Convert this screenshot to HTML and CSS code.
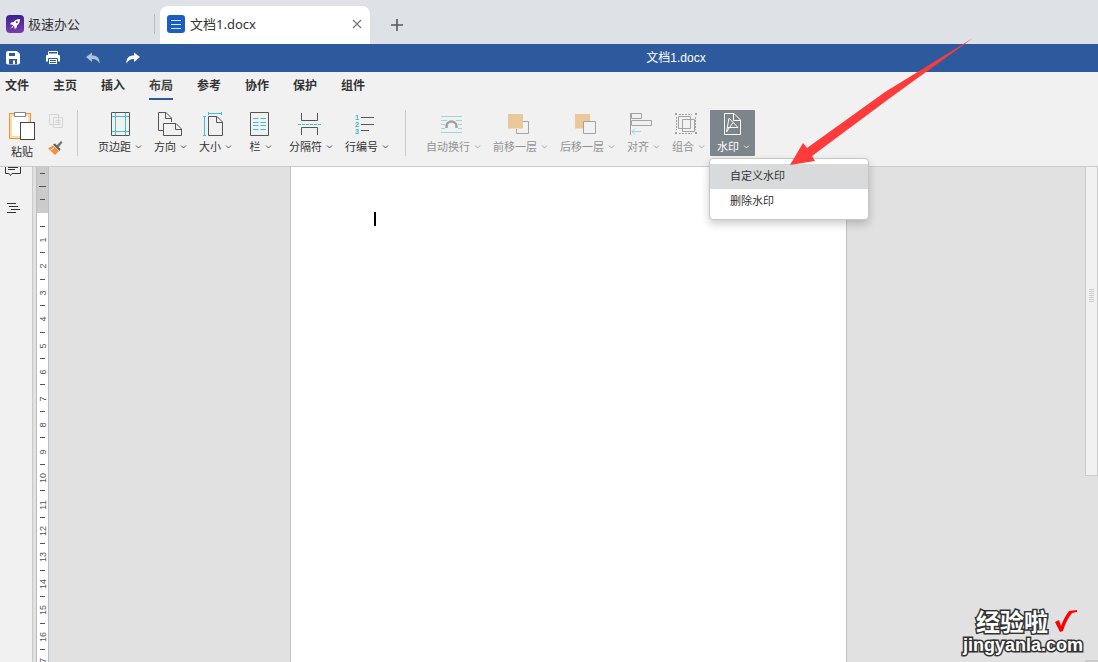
FILE: index.html
```html
<!DOCTYPE html>
<html lang="zh-CN">
<head>
<meta charset="utf-8">
<title>文档1.docx</title>
<meta name="viewport" content="width=device-width, initial-scale=1">
<link rel="stylesheet" href="styles.css">
</head>
<body>
<div class="app">
  <div class="tabbar">
    <button class="home-tab" type="button">
      <svg class="app-icon" viewBox="0 0 18 18" aria-hidden="true">
        <defs><linearGradient id="g" x1="0" y1="0" x2="0" y2="1"><stop offset="0" stop-color="#3b2090"/><stop offset="1" stop-color="#7c3cae"/></linearGradient></defs>
        <rect width="18" height="18" rx="4" fill="url(#g)"/>
        <path d="M14 4C11 4 9 5 7.500 7L5 7.500L4 9.500L6 9.500L8.500 12L8.500 14L10.500 13L11 10.500C13 9 14 7 14 4Z" fill="#fff"/>
        <path d="M6.500 11L4.500 13.500L7.500 12Z" fill="#fff"/>
        <circle cx="10.800" cy="7.200" r="1" fill="#53299b"/>
      </svg>
      <span>极速办公</span>
    </button>
    <div class="doc-tab">
      <svg class="app-icon" viewBox="0 0 18 18" aria-hidden="true"><rect width="18" height="18" rx="3" fill="#1c5dc2"/><path d="M4 5.500H14M4 9.500H14M4 13.500H14" stroke="#dfe8f6"/></svg>
      <span class="doc-name">文档1.docx</span>
      <button class="icon-button" type="button" aria-label="关闭"><svg width="10" height="10" viewBox="0 0 10 10"><path d="M1 1L9 9M9 1L1 9" stroke="#777" stroke-width="1.200"/></svg></button>
    </div>
    <button class="icon-button new-tab" type="button" aria-label="新建"><svg width="14" height="14" viewBox="0 0 14 14"><path d="M7 1V13M1 7H13" stroke="#55585c" stroke-width="1.600"/></svg></button>
  </div>

  <header class="titlebar">
    <div class="quick">
      <button class="icon-button" type="button" aria-label="保存"><svg width="16" height="16" viewBox="0 0 16 16"><path d="M1 3Q1 1 3 1H12L15 4V12.500Q15 14.500 13 14.500H3Q1 14.500 1 12.500Z" fill="#fff"/><path d="M4 3H10V6H4ZM4 9H12V14H4Z" fill="#2d5a9c"/><path d="M8 10.500H10V14H8Z" fill="#fff"/></svg></button>
      <button class="icon-button" type="button" aria-label="打印"><svg width="16" height="16" viewBox="0 0 16 16"><path d="M3.500 5V1.500H12.500V5" fill="#2d5a9c" stroke="#fff"/><path d="M1 6Q1 5 2 5H14Q15 5 15 6V11.500H1Z" fill="#fff"/><path d="M3 3.500H13V5H3Z" fill="#fff"/><path d="M3.500 8.500H12.500V14.500H3.500Z" fill="#fff" stroke="#2d5a9c"/><path d="M5 10.500H11M5 12.500H11" stroke="#2d5a9c"/></svg></button>
      <button class="icon-button" type="button" aria-label="撤销" disabled><svg width="16" height="16" viewBox="0 0 16 16"><path d="M1 7L7 2.500V5.500C12 5.500 15 8 14.500 13.500C13 10.500 11 9 7 9V12Z" fill="#b0c0da"/></svg></button>
      <button class="icon-button" type="button" aria-label="重做"><svg width="16" height="16" viewBox="0 0 16 16"><path d="M15 7L9 2.500V5.500C4 5.500 1 8 1.500 13.500C3 10.500 5 9 9 9V12Z" fill="#fff"/></svg></button>
    </div>
    <h1 class="title">文档1.docx</h1>
  </header>

  <nav class="menu">
    <button type="button">文件</button>
    <button type="button">主页</button>
    <button type="button">插入</button>
    <button type="button" class="active">布局</button>
    <button type="button">参考</button>
    <button type="button">协作</button>
    <button type="button">保护</button>
    <button type="button">组件</button>
  </nav>

  <div class="ribbon">
    <div class="clipboard">
      <button class="paste" type="button">
        <svg width="28" height="32" viewBox="0 0 28 32" aria-hidden="true"><rect x="1.500" y="3.500" width="21" height="25" fill="#fff" stroke="#ec913d"/><rect x="3" y="5" width="18" height="22" fill="#fff" stroke="#fbdca8" stroke-width="2"/><rect x="6.500" y="2.500" width="11" height="4" fill="#fff" stroke="#888"/><rect x="12.500" y="12.500" width="14" height="17" fill="#fff" stroke="#444"/></svg>
        <span>粘贴</span>
      </button>
      <div class="mini">
        <button class="icon-button" type="button" aria-label="复制" disabled><svg width="16" height="16" viewBox="0 0 16 16"><path d="M1.500 1.500H10.500V11.500H1.500ZM5.500 4.500H14.500V14.500H5.500Z" fill="#f1f1f1" stroke="#d5d5d5"/><path d="M7.500 7.500H12.500M7.500 9.500H12.500M7.500 11.500H12.500" stroke="#d5d5d5"/></svg></button>
        <button class="icon-button" type="button" aria-label="格式刷"><svg width="16" height="16" viewBox="0 0 16 16"><path d="M0 8.500L5 5.500L11 11L7 15Z" fill="#f0923c"/><path d="M2.500 10L6 8" stroke="#fff"/><path d="M5 4.500L7 3.500L12.500 9L11.500 11Z" fill="#5d5d5d"/><path d="M8.500 5.500L13 1L14.500 2.500L10.500 7.500Z" fill="#777"/></svg></button>
      </div>
    </div>
    <div class="group">
      <button class="tool" type="button"><svg class="glyph" viewBox="0 0 30 28"><path class="accent" d="M10.500 3V25M20.500 3V25M6 6.500H24M6 21.500H24"/><path class="line" d="M6.500 2.500H24.500V25.500H6.500Z"/></svg><span class="label">页边距<svg class="chevron" viewBox="0 0 5 4"><path d="M0 .5L2.500 3L5 .5"/></svg></span></button>
      <button class="tool" type="button"><svg class="glyph" viewBox="0 0 30 28"><path class="line" d="M8 20.500H3.500V2.500H11L16.500 8V12M10.500 3V8.500H16M8.500 13.500H21L26.500 19V25.500H8.500ZM20.500 14V19.500H26"/></svg><span class="label">方向<svg class="chevron" viewBox="0 0 5 4"><path d="M0 .5L2.500 3L5 .5"/></svg></span></button>
      <button class="tool" type="button"><svg class="glyph" viewBox="0 0 30 28"><path class="accent" d="M8 3.500H22M8.500 2V5M21.500 2V5M4.500 6V25M3 6.500H6M3 25.500H6"/><path class="line" d="M8.500 6.500H17L22.500 12V25.500H8.500ZM16.500 7V12.500H22"/></svg><span class="label">大小<svg class="chevron" viewBox="0 0 5 4"><path d="M0 .5L2.500 3L5 .5"/></svg></span></button>
      <button class="tool" type="button"><svg class="glyph" viewBox="0 0 30 28"><path class="line" d="M5.500 2.500H23.500V25.500H5.500Z"/><path class="accent" d="M8 8.500H13.500M15.500 8.500H21M8 12.500H13.500M15.500 12.500H21M8 15.500H13.500M15.500 15.500H21M8 19.500H13.500M15.500 19.500H21"/></svg><span class="label">栏<svg class="chevron" viewBox="0 0 5 4"><path d="M0 .5L2.500 3L5 .5"/></svg></span></button>
      <button class="tool" type="button"><svg class="glyph" viewBox="0 0 30 28"><path class="line" d="M5.500 3V10.500H21.500V3M5.500 25V17.500H21.500V25"/><path class="accent" stroke-dasharray="3 1" d="M2 14.500H25"/></svg><span class="label">分隔符<svg class="chevron" viewBox="0 0 5 4"><path d="M0 .5L2.500 3L5 .5"/></svg></span></button>
      <button class="tool" type="button"><svg class="glyph" viewBox="0 0 30 28"><path class="line" d="M9 7.500H22M9 14.500H22M9 20.500H17"/><g class="digits"><text x="3" y="10">1</text><text x="3" y="17">2</text><text x="3" y="24">3</text></g></svg><span class="label">行编号<svg class="chevron" viewBox="0 0 5 4"><path d="M0 .5L2.500 3L5 .5"/></svg></span></button>
    </div>
    <div class="group">
      <button class="tool" type="button" disabled><svg class="glyph" viewBox="0 0 30 28"><path class="accent" d="M3 6.500H24M3 10.500H9M18 10.500H24M3 14.500H7M20 14.500H24M3 18.500H7M20 18.500H24M3 22.500H24"/><path d="M8.500 18V16.500A5 5 0 0 1 18.500 16.500V18" fill="none" stroke="#555" stroke-width="2.500"/></svg><span class="label">自动换行<svg class="chevron" viewBox="0 0 5 4"><path d="M0 .5L2.500 3L5 .5"/></svg></span></button>
      <button class="tool" type="button" disabled><svg class="glyph" viewBox="0 0 30 28"><path class="line" d="M18 11.500H23.500V23.500H11.500V19"/><path d="M3 4H18V18.500H3Z" fill="#e6a144"/></svg><span class="label">前移一层<svg class="chevron" viewBox="0 0 5 4"><path d="M0 .5L2.500 3L5 .5"/></svg></span></button>
      <button class="tool" type="button" disabled><svg class="glyph" viewBox="0 0 30 28"><path d="M3 4H18V11H11V18.500H3Z" fill="#e6a144"/><path class="line" d="M11.500 11.500H23.500V23.500H11.500Z"/></svg><span class="label">后移一层<svg class="chevron" viewBox="0 0 5 4"><path d="M0 .5L2.500 3L5 .5"/></svg></span></button>
      <button class="tool" type="button" disabled><svg class="glyph" viewBox="0 0 30 28"><path class="line" d="M2.500 3V25M3.500 3.500H13.500V8.500H3.500ZM3.500 10.500H23.500V15.500H3.500Z"/><path class="accent" d="M4 21.500H13M7 18.500L4 21.500L7 24.500"/></svg><span class="label">对齐<svg class="chevron" viewBox="0 0 5 4"><path d="M0 .5L2.500 3L5 .5"/></svg></span></button>
      <button class="tool" type="button" disabled><svg class="glyph" viewBox="0 0 30 28"><path class="line" d="M6 4.500H19M3.500 7V20M22.500 7V20M6 23.500H19" stroke-dasharray="2 1"/><path class="line" d="M5.500 6.500H17.500V18.500H5.500ZM9.500 9.500H21.500V21.500H9.500Z"/><path fill="#555" d="M2 3H4V5H2ZM22 3H24V5H22ZM2 22H4V24H2ZM22 22H24V24H22Z"/></svg><span class="label">组合<svg class="chevron" viewBox="0 0 5 4"><path d="M0 .5L2.500 3L5 .5"/></svg></span></button>
      <div class="dropdown">
        <button class="tool open" type="button" aria-expanded="true"><svg class="glyph" viewBox="0 0 30 28"><path class="line" d="M6.500 3.500H16L22.500 10V24.500H6.500ZM15.500 4V10.500H22M8.500 22L11 8L20 17.500L10 17.500M8.500 22L15 12.500"/></svg><span class="label">水印<svg class="chevron" viewBox="0 0 5 4"><path d="M0 .5L2.500 3L5 .5"/></svg></span></button>
        <div class="popup">
          <button type="button" class="hovered">自定义水印</button>
          <button type="button">删除水印</button>
        </div>
      </div>
    </div>
  </div>

  <main class="workspace">
    <aside class="side">
      <button class="icon-button" type="button" aria-label="批注"><svg width="18" height="12" viewBox="0 0 18 12"><path d="M1.500 0V6.500H5L6.500 8.500L8 6.500H16.500V0M4 .5H14M4 2.500H11" fill="none" stroke="#333"/></svg></button>
      <button class="icon-button" type="button" aria-label="导航"><svg width="18" height="12" viewBox="0 0 18 12"><path d="M3 1.500H12M5 4.500H14M7 7.500H16M3 10.500H12" stroke="#333"/></svg></button>
    </aside>
    <div class="ruler">
      <svg width="11" height="530" viewBox="0 0 11 530">
        <rect width="11" height="46" fill="#cbcbcb"/>
        <path stroke="#555" d="M3 6.500H8M2 19.500H9M3 32.500H8M3 59.500H8M3 85.500H8M3 112.500H8M3 138.500H8M3 165.500H8M3 191.500H8M3 217.500H8M3 244.500H8M3 270.500H8M3 297.500H8M3 323.500H8M3 350.500H8M3 376.500H8M3 403.500H8M3 429.500H8M3 456.500H8M3 482.500H8"/>
        <g class="marks">
          <text transform="translate(9 73) rotate(-90)">1</text>
          <text transform="translate(9 99) rotate(-90)">2</text>
          <text transform="translate(9 126) rotate(-90)">3</text>
          <text transform="translate(9 152) rotate(-90)">4</text>
          <text transform="translate(9 179) rotate(-90)">5</text>
          <text transform="translate(9 205) rotate(-90)">6</text>
          <text transform="translate(9 232) rotate(-90)">7</text>
          <text transform="translate(9 258) rotate(-90)">8</text>
          <text transform="translate(9 285) rotate(-90)">9</text>
          <text transform="translate(9 311) rotate(-90)">10</text>
          <text transform="translate(9 338) rotate(-90)">11</text>
          <text transform="translate(9 364) rotate(-90)">12</text>
          <text transform="translate(9 390) rotate(-90)">13</text>
          <text transform="translate(9 417) rotate(-90)">14</text>
          <text transform="translate(9 443) rotate(-90)">15</text>
          <text transform="translate(9 470) rotate(-90)">16</text>
          <text transform="translate(9 496) rotate(-90)">17</text>
        </g>
      </svg>
    </div>
    <div class="canvas"><div class="page"><div class="caret"></div></div></div>
    <div class="scroll"><div class="thumb"><div class="grip"></div></div><div class="corner"></div></div>
  </main>
</div>

<svg class="arrow" width="184" height="129" viewBox="0 0 184 129" aria-hidden="true"><path d="M0 128L13 106L17 111L95 55L183 1L100 61L22 119L25 124Z" fill="#fc3b3a"/></svg>

<div class="brand">
  <div class="brand-top"><span>经验啦</span><svg width="26" height="26" viewBox="0 0 26 26" aria-hidden="true"><path d="M3 13L7 11L9 17C11 11 14 6 17 2L25 1V3L20 4C16 9 13 15 11 22L8 23Z" fill="#f00"/></svg></div>
  <div class="brand-url">jingyanla.com</div>
</div>
</body>
</html>
```

FILE: styles.css
```css
* { box-sizing: border-box; }
body {
  margin: 0;
  overflow: hidden;
  font: 11px/16px "Noto Sans", "Noto Sans CJK SC", sans-serif;
  color: #333;
  background: #e1e1e1;
}
button {
  margin: 0;
  padding: 0;
  border: 0;
  background: none;
  font: inherit;
  color: inherit;
}
svg { display: block; flex: none; }
.app { display: flex; flex-direction: column; height: 100vh; }
.icon-button { display: grid; place-items: center; }

.tabbar {
  display: flex;
  align-items: flex-end;
  height: 44px;
  background: #dee1e6;
  font-size: 13px;
}
.app-icon { width: 18px; height: 18px; }
.home-tab {
  display: flex;
  align-items: center;
  gap: 4px;
  width: 155px;
  height: 20px;
  margin: 0 5px 10px 0;
  padding-left: 6px;
  border-right: 1px solid #b9bcc1;
}
.doc-tab {
  display: flex;
  align-items: center;
  gap: 5px;
  width: 210px;
  height: 38px;
  padding: 0 8px 2px 7px;
  border-radius: 8px 8px 0 0;
  background: #fff;
}
.doc-name { flex: 1; }
.new-tab { width: 54px; height: 38px; }

.titlebar {
  display: flex;
  align-items: center;
  height: 28px;
  color: #fff;
  background: #2d5a9c;
}
.quick { display: flex; gap: 24px; width: 254px; padding-left: 5px; }
.title { flex: 1; margin: 0; font: 400 12px/16px "Liberation Sans", "Noto Sans CJK SC", sans-serif; text-align: center; }

.menu {
  display: flex;
  gap: 24px;
  padding-left: 5px;
  background: #f1f1f1;
  font-size: 12px;
  font-weight: 700;
}
.menu button { height: 28px; padding-top: 2px; border-bottom: 2px solid transparent; }
.menu .active { border-color: #2d5a9c; color: #444; }

.ribbon {
  display: flex;
  height: 67px;
  padding: 10px 0;
  border-bottom: 1px solid #cbcbcb;
  background: #f1f1f1;
}
.clipboard {
  display: flex;
  gap: 12px;
  width: 78px;
  padding-left: 8px;
  border-right: 1px solid #cbcbcb;
}
.paste { display: flex; flex-direction: column; align-items: center; gap: 2px; }
.mini { display: flex; flex-direction: column; justify-content: space-between; padding-top: 3px; }
.group { display: flex; padding: 0 11px 0 13px; border-right: 1px solid #cbcbcb; }
.group:last-child { border: 0; }
.tool {
  display: flex;
  flex-direction: column;
  align-items: center;
  gap: 1px;
  min-width: 45px;
  height: 46px;
  padding: 0 6px 0 7px;
}
.tool:disabled { opacity: .5; }
.glyph { width: 30px; height: 28px; }
.line { fill: none; stroke: #555; }
.accent { fill: none; stroke: #3fbfd3; }
.digits { fill: #2fb9d0; font: 700 7px "Liberation Sans", sans-serif; }
.label { display: flex; align-items: center; gap: 5px; white-space: nowrap; }
.chevron { width: 5px; height: 4px; overflow: visible; fill: none; stroke: currentColor; stroke-width: .8; }
.open { color: #fff; background: #7d858c; border-radius: 1px; }
.open .line { stroke: #fff; }

.dropdown { position: relative; }
.popup {
  position: absolute;
  z-index: 2;
  top: 48px;
  left: -1px;
  display: flex;
  flex-direction: column;
  width: 160px;
  padding: 5px 0;
  border: 1px solid #c6c6c6;
  border-radius: 4px;
  background: #fff;
  box-shadow: 0 4px 8px rgba(0, 0, 0, .2);
}
.popup button { height: 25px; padding: 0 0 2px 20px; text-align: left; }
.hovered { background: #d8dadc; }

.workspace { display: flex; flex: 1; min-height: 0; overflow: hidden; }
.side {
  display: flex;
  flex-direction: column;
  gap: 23px;
  width: 33px;
  padding-left: 4px;
  border-right: 1px solid #cbc8c8;
  background: #f1f1f1;
}
.side .icon-button { width: 18px; }
.ruler {
  width: 13px;
  margin-left: 3px;
  border: solid #b9bdc5;
  border-width: 0 1px;
  background: #fff;
}
.marks { fill: #555; font: 9px "Liberation Sans", sans-serif; text-anchor: middle; }
.canvas { display: flex; flex: 1; justify-content: center; padding-left: 3px; }
.page {
  width: 557px;
  padding: 45px 83px;
  border: solid #c3c3c3;
  border-width: 0 1px;
  background: #fff;
}
.caret { width: 2px; height: 14px; background: #000; }
.scroll { display: flex; flex-direction: column; justify-content: space-between; width: 13px; }
.thumb {
  display: grid;
  place-items: center;
  height: 62.5%;
  padding-bottom: 52px;
  border: 1px solid #cbcbcb;
  border-top: 0;
  background: #f1f1f1;
}
.grip { width: 5px; height: 13px; background: repeating-linear-gradient(#cbcbcb 0 1px, transparent 1px 2px); }
.corner { height: 2px; border: 1px solid #cbcbcb; }

.arrow { position: absolute; z-index: 3; top: 37px; left: 790px; }
.brand {
  position: absolute;
  right: 15px;
  bottom: 7px;
  color: #fff;
  font-weight: 700;
  -webkit-text-stroke: 3px #333;
  paint-order: stroke fill;
}
.brand-top {
  display: flex;
  align-items: center;
  justify-content: flex-end;
  gap: 4px;
  padding-right: 5px;
  font-size: 24px;
  line-height: 26px;
}
.brand-url { font: 700 18px/20px "Liberation Sans", sans-serif; }
```
